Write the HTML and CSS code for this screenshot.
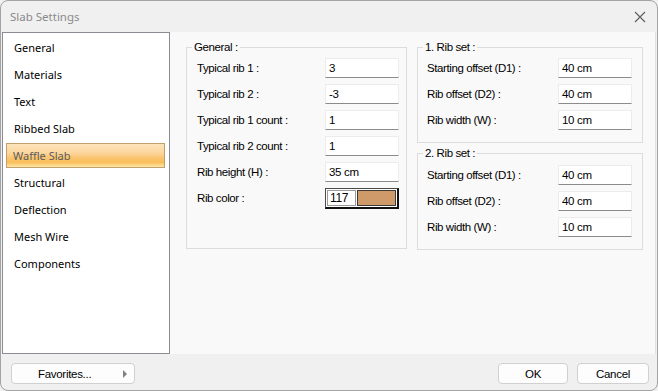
FILE: index.html
```html
<!DOCTYPE html>
<html lang="en">
<head>
    <meta charset="UTF-8">
    <meta name="viewport" content="width=device-width, initial-scale=1.0">
    <title>Slab Settings</title>
    <link rel="stylesheet" href="styles.css">
</head>
<body>
    <div class="window">
        <div class="titlebar">
            <span class="title">Slab Settings</span>
            <svg class="close" width="12" height="12" viewBox="0 0 12 12">
                <path d="M1 1 L11 11 M11 1 L1 11" stroke="#5c5c5c" stroke-width="1.1" fill="none"/>
            </svg>
        </div>

        <div class="main">
            <ul class="nav">
                <li>General</li>
                <li>Materials</li>
                <li>Text</li>
                <li>Ribbed Slab</li>
                <li class="active">Waffle Slab</li>
                <li>Structural</li>
                <li>Deflection</li>
                <li>Mesh Wire</li>
                <li>Components</li>
            </ul>

            <div class="panel">
                <div class="group general">
                    <span class="legend">General :</span>
                    <div class="row"><label>Typical rib 1 :</label><div class="field">3</div></div>
                    <div class="row"><label>Typical rib 2 :</label><div class="field">-3</div></div>
                    <div class="row"><label>Typical rib 1 count :</label><div class="field">1</div></div>
                    <div class="row"><label>Typical rib 2 count :</label><div class="field">1</div></div>
                    <div class="row"><label>Rib height (H) :</label><div class="field">35 cm</div></div>
                    <div class="row">
                        <label>Rib color :</label>
                        <div class="color-field">
                            <span class="color-index">117</span>
                            <span class="color-swatch"></span>
                        </div>
                    </div>
                </div>

                <div class="sets">
                    <div class="group ribset">
                        <span class="legend">1. Rib set :</span>
                        <div class="row"><label>Starting offset (D1) :</label><div class="field">40 cm</div></div>
                        <div class="row"><label>Rib offset (D2) :</label><div class="field">40 cm</div></div>
                        <div class="row"><label>Rib width (W) :</label><div class="field">10 cm</div></div>
                    </div>
                    <div class="group ribset second">
                        <span class="legend">2. Rib set :</span>
                        <div class="row"><label>Starting offset (D1) :</label><div class="field">40 cm</div></div>
                        <div class="row"><label>Rib offset (D2) :</label><div class="field">40 cm</div></div>
                        <div class="row"><label>Rib width (W) :</label><div class="field">10 cm</div></div>
                    </div>
                </div>
            </div>
        </div>

        <div class="footer">
            <button class="btn favorites">Favorites...<span class="arrow"></span></button>
            <div class="spacer"></div>
            <button class="btn">OK</button>
            <button class="btn">Cancel</button>
        </div>
    </div>
</body>
</html>
```

FILE: styles.css
```css
body {
    margin: 0;
    background: #f0f0f0;
    font-family: "Liberation Sans", Arial, sans-serif;
}
.window {
    width: 658px;
    height: 391px;
    box-sizing: border-box;
    border: 1px solid #a3a3a3;
    border-radius: 8px;
    background: #f0f0f0;
    display: flex;
    flex-direction: column;
    overflow: hidden;
}
.titlebar {
    height: 31px;
    flex: none;
    display: flex;
    align-items: center;
    padding: 0 10px 0 9px;
}
.title {
    flex: 1;
    font-family: "Noto Sans", sans-serif;
    font-size: 11.5px;
    color: #8a8a8a;
}
.close { margin-right: 1px; }

.main {
    height: 322px;
    display: flex;
    padding-left: 1px;
    padding-right: 1px;
}
.nav {
    list-style: none;
    margin: 0;
    padding: 2px 4px 0 4px;
    width: 168px;
    box-sizing: border-box;
    background: #fff;
    border: 1px solid #8a8d94;
    font-family: "Noto Sans", sans-serif;
    font-size: 11px;
}
.nav li {
    height: 25px;
    line-height: 25px;
    margin-bottom: 2px;
    padding-left: 7px;
    box-sizing: border-box;
    color: #000;
}
.nav li.active {
    border: 1px solid #c39f6b;
    line-height: 23px;
    padding-left: 6px;
    margin-left: -1px;
    padding-right: 1px;
    width: calc(100% + 1px);
    color: #5b5b5b;
    background: linear-gradient(#fde4bb 0%, #fcd59c 40%, #fbc56f 60%, #f9be5b 80%, #fde8a8 100%);
}
.panel {
    flex: 1;
    display: flex;
    gap: 10px;
    padding: 15px 0 0 16px;
    background: #f9f9f9;
    border-right: 1px solid #e2e2e2;
    font-size: 11.5px;
    letter-spacing: -0.4px;
    color: #000;
}
.group {
    position: relative;
    box-sizing: border-box;
    border: 1px solid #dcdcdc;
    display: flex;
    flex-direction: column;
    gap: 6px;
}
.legend {
    position: absolute;
    top: -8px;
    left: 5px;
    padding: 0 2px;
    background: #f9f9f9;
    line-height: 14px;
}
.general {
    width: 221px;
    height: 202px;
    padding: 10px 0 0 10px;
}
.sets {
    display: flex;
    flex-direction: column;
    gap: 10px;
}
.ribset {
    width: 226px;
    height: 96px;
    padding: 10px 0 0 9px;
}
.ribset.second {
    height: 97px;
    padding-top: 11px;
}
.row {
    display: flex;
    align-items: center;
    height: 20px;
}
.general label { width: 128px; }
.ribset label { width: 131px; }
.field {
    width: 74px;
    height: 20px;
    box-sizing: border-box;
    background: #fff;
    border: 1px solid #ececec;
    border-bottom-color: #8b8b8b;
    padding-left: 3px;
    line-height: 18px;
    letter-spacing: -0.3px;
}
.color-field {
    width: 74px;
    height: 21px;
    margin-top: 1px;
    box-sizing: border-box;
    border: 1px solid #4a4a4a;
    border-right: 2px solid #111;
    border-bottom: 2px solid #111;
    display: flex;
    padding: 1px;
    gap: 1px;
    background: #fff;
}
.color-index {
    width: 29px;
    box-sizing: border-box;
    border: 1px solid #9a9a9a;
    line-height: 14px;
    padding-left: 2px;
    font-size: 12px;
    letter-spacing: -0.3px;
}
.color-swatch {
    flex: 1;
    background: #cf9a69;
    border: 1px solid #3a3a3a;
}

.footer {
    flex: 1;
    display: flex;
    align-items: flex-start;
    padding: 9px 8px 0 10px;
    gap: 9px;
}
.spacer { flex: 1; }
.btn {
    width: 70px;
    height: 21px;
    box-sizing: border-box;
    border: 1px solid #d0d0d0;
    border-radius: 4px;
    background: #fdfdfd;
    font-family: "Liberation Sans", Arial, sans-serif;
    font-size: 11.5px;
    letter-spacing: -0.3px;
    color: #000;
    padding: 0;
}
.btn:last-child { width: 72px; }
.favorites {
    width: 124px;
    position: relative;
    text-align: left;
    padding-left: 26px;
}
.arrow {
    position: absolute;
    right: 7px;
    top: 6px;
    border-left: 4px solid #808080;
    border-top: 4px solid transparent;
    border-bottom: 4px solid transparent;
}
```
